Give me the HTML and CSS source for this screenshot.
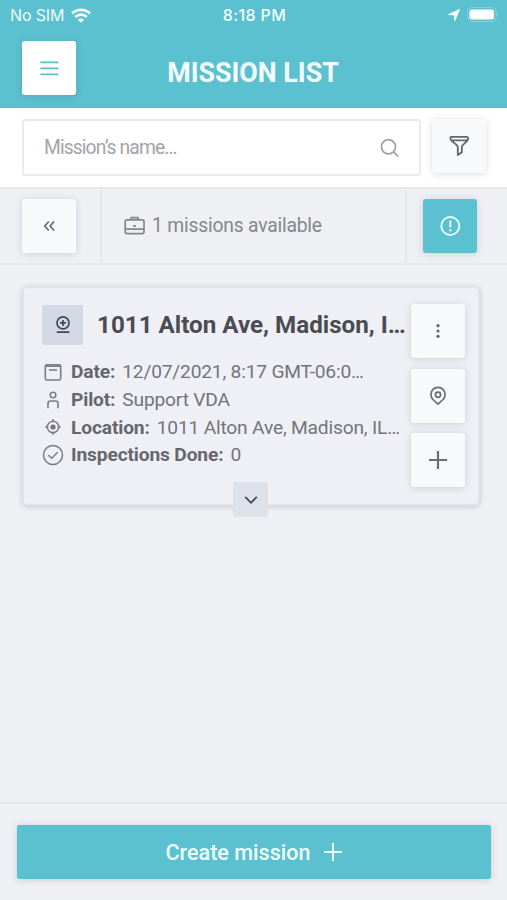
FILE: index.html
```html
<!DOCTYPE html>
<html lang="en">
<head>
<meta charset="utf-8">
<title>Mission list</title>
<link rel="stylesheet" href="styles.css">
</head>
<body>
<div class="app">
  <header class="header">
    <div class="status">
      <div class="carrier"><span>No SIM</span>
        <svg class="wifi" width="20" height="15" viewBox="0 0 20 15" fill="none" stroke="#fff" stroke-width="2.8"><path d="M1 5.5a13 13 0 0 1 18 0M4.2 8.9a8.4 8.4 0 0 1 11.6 0"/><path d="M10 14.8 6.9 11.7a4.4 4.4 0 0 1 6.2 0z" fill="#fff" stroke="none"/></svg>
      </div>
      <span class="clock">8:18 PM</span>
      <div class="indicators">
        <svg width="12" height="12" viewBox="0 0 12 12" fill="#fff"><path d="M11.6.4 6.8 11.8 6.2 6 .4 5.5z" stroke="#fff" stroke-width=".7" stroke-linejoin="round"/></svg>
        <svg width="32" height="16" viewBox="0 0 32 16"><rect x=".5" y=".5" width="28.5" height="14" rx="4" fill="none" stroke="#fff" stroke-opacity=".25"/><rect x="2.5" y="2.5" width="24.5" height="10" rx="2.3" fill="#fff"/><path d="M30.5 5.8v3.6" stroke="#fff" stroke-opacity=".25" stroke-width="1.2"/></svg>
      </div>
    </div>
    <div class="titlebar">
      <button class="tile menu" aria-label="Menu"><svg width="20" height="16" viewBox="0 0 20 16" stroke="#5bc0cf" stroke-width="1.7"><path d="M1.400 2.300h18M1.400 8.300h18M1.400 14.300h18"/></svg></button>
      <h1>MISSION LIST</h1>
    </div>
  </header>

  <section class="search">
    <div class="field"><span>Mission’s name...</span>
      <svg width="20" height="20" viewBox="0 0 20 20" fill="none" stroke="#a0a0a3" stroke-width="1.7"><circle cx="8.5" cy="8.8" r="7.1"/><path d="m13.6 13.9 4.6 4.6"/></svg>
    </div>
    <button class="tile" aria-label="Filter"><svg width="22" height="22" viewBox="0 0 22 22" fill="none" stroke="#63656d" stroke-width="1.8" stroke-linejoin="round"><path d="M3.200 1.800h15.600c1 0 1.300.7 1.300 1.600 0 3.600-6.300 5.600-6.300 8.600v5.200l-4 2.800v-8c0-3-7.300-5-7.300-8.600 0-.9-.3-1.600.7-1.600zM2.800 5.400h16.600"/></svg></button>
  </section>

  <section class="toolbar">
    <div class="cell back"><button class="tile" aria-label="Back"><svg width="12" height="12" viewBox="0 0 12 12" fill="none" stroke="#67696f" stroke-width="1.7"><path d="M5.800 1.500 1.800 6l4 4.500M11.100 1.500l-4 4.500 4 4.500"/></svg></button></div>
    <div class="cell count"><svg width="22" height="19" viewBox="0 0 22 19" fill="none" stroke="#85868e" stroke-width="1.7"><rect x="1.2" y="3.8" width="18.8" height="13.8" rx="2"/><path d="M6.5 3.6l.8-2h6.6l.8 2M1.2 13.200h18.800M9.200 9.800h2.800"/></svg><span>1 missions available</span></div>
    <div class="cell alert"><button class="tile accent" aria-label="Alerts"><svg width="22" height="22" viewBox="0 0 22 22" fill="none" stroke="#e9feff" stroke-width="1.9"><circle cx="11.300" cy="11" r="9"/><path d="M11.300 5.500v6.800M11.300 14.300v2"/></svg></button></div>
  </section>

  <main>
    <article class="card">
      <div class="info">
        <div class="heading">
          <div class="badge"><svg width="18" height="20" viewBox="0 0 18 20" fill="none" stroke="#454854" stroke-width="1.7"><circle cx="9" cy="7.900" r="6"/><path d="M6 7.900h6M9 4.900v6M2.700 17.200h12.600"/></svg></div>
          <h2>1011 Alton Ave, Madison, I…</h2>
        </div>
        <ul>
          <li><svg width="22" height="22" viewBox="0 0 22 22" fill="none" stroke="#7b7c84" stroke-width="1.6"><rect x="3.3" y="3.8" width="15.4" height="15.2" rx="1.6"/><path d="M3.3 5.100h15.400M7 9h8.200"/></svg><b>Date:</b><span class="date">12/07/2021, 8:17 GMT-06:0…</span></li>
          <li><svg width="22" height="22" viewBox="0 0 22 22" fill="none" stroke="#7b7c84" stroke-width="1.6"><circle cx="11" cy="6" r="2.8"/><path d="M6 19.300v-4.800c0-1.700.8-2.500 2.500-2.500h5c1.700 0 2.500.8 2.500 2.500v4.800"/></svg><b>Pilot:</b><span class="pilot">Support VDA</span></li>
          <li><svg width="22" height="22" viewBox="0 0 22 22" fill="none" stroke="#7b7c84" stroke-width="1.6"><circle cx="11" cy="11" r="5.7"/><circle cx="11" cy="11" r="2.6" fill="#71737a" stroke="none"/><path d="M11 3.200v3M11 15.800v3M3.200 11h3M15.800 11h3"/></svg><b>Location:</b><span class="location">1011 Alton Ave, Madison, IL…</span></li>
          <li><svg width="22" height="22" viewBox="0 0 22 22" fill="none" stroke="#7b7c84" stroke-width="1.500"><circle cx="11" cy="11" r="9.500"/><path d="m6.300 11 3.400 3.200 5.900-6"/></svg><b>Inspections Done:</b><span class="done">0</span></li>
        </ul>
      </div>
      <div class="actions">
        <button class="tile" aria-label="More"><svg width="6" height="16" viewBox="0 0 6 16" fill="#63656d"><circle cx="3" cy="2.700" r="1.600"/><circle cx="3" cy="8" r="1.600"/><circle cx="3" cy="13.300" r="1.600"/></svg></button>
        <button class="tile" aria-label="Map"><svg width="18" height="20" viewBox="0 0 18 20" fill="none" stroke="#6b6c73" stroke-width="1.700"><path d="M9 18.200 4 13.500a7.100 7.100 0 1 1 10 0z" stroke-linejoin="round"/><circle cx="9" cy="8.700" r="2.600"/></svg></button>
        <button class="tile" aria-label="Add"><svg width="20" height="20" viewBox="0 0 20 20" stroke="#6b6c73" stroke-width="2.200"><path d="M10 1v18M1 10h18"/></svg></button>
      </div>
      <button class="expand" aria-label="Expand"><svg width="14" height="10" viewBox="0 0 14 10" fill="none" stroke="#454854" stroke-width="1.800"><path d="m1.200 1.800 5.800 6 5.800-6"/></svg></button>
    </article>
  </main>

  <footer>
    <button class="create"><span>Create mission</span><svg width="20" height="20" viewBox="0 0 20 20" stroke="#effeff" stroke-width="1.900"><path d="M10 1v18M1 10h18"/></svg></button>
  </footer>
</div>
</body>
</html>
```

FILE: styles.css
```css
* { box-sizing: border-box; }
body { margin: 0; font-family: Roboto, sans-serif; background: #eff0f4; color: #73747b; }
h1, h2, ul { margin: 0; padding: 0; }
button { border: 0; padding: 0; font: inherit; }
svg { display: block; flex: none; }
.app { height: 900px; display: flex; flex-direction: column; overflow: hidden; }

.header { height: 108px; background: #5bc0cf; color: #f5feff; }
.status { height: 30px; display: grid; grid-template-columns: 1fr auto 1fr; align-items: center; padding: 0 8px 0 10px; font: 16px/20px Inter, sans-serif; }
.carrier { display: flex; align-items: center; gap: 7px; letter-spacing: -.15px; opacity: .95; }
.clock { font-weight: 500; letter-spacing: .4px; }
.indicators { display: flex; justify-content: flex-end; align-items: center; gap: 7px; }
.titlebar { display: grid; grid-template-columns: 54px 1fr 54px; align-items: center; padding: 11px 23px 0 22px; }
h1 { font-size: 26.8px; line-height: 32px; font-weight: 700; text-align: center; padding-top: 9px; white-space: nowrap; }

.tile { width: 54px; height: 54px; flex: none; display: flex; align-items: center; justify-content: center; background: #f8f9fb; border-radius: 3px; box-shadow: 0 1px 7px rgba(70, 75, 95, .2); }
.menu { background: #fff; }
.accent { background: #5bc0cf; }

.search { height: 79px; background: #fff; display: flex; padding: 11px 21px 0 22px; gap: 11px; }
.field { flex: 1; height: 57px; border: 2px solid #ebebed; border-radius: 3px; display: flex; align-items: center; justify-content: space-between; padding: 0 19px 0 20px; color: #a3a4a7; font-size: 19.3px; letter-spacing: -.9px; }

.toolbar { height: 78px; display: grid; grid-template-columns: 102px 305px 1fr; border-top: 2px solid #e7e8ec; border-bottom: 2px solid #e7e8ec; }
.cell { display: flex; align-items: center; border-right: 2px solid #e7e8ec; }
.alert { border: 0; padding-left: 16px; }
.back { padding-left: 22px; }
.count { padding: 0 0 1px 22px; gap: 6px; font-size: 19.3px; letter-spacing: -.2px; color: #85868e; }

main { flex: 1; padding: 21px 27px 0 22px; }
.card { position: relative; height: 220px; border: 2px solid #e3e4e9; border-radius: 6px; box-shadow: 0 1px 5px rgba(70, 75, 90, .25); display: flex; justify-content: space-between; padding: 16px 13px 0 18px; background: #eff0f5; }
.info { width: 368px; }
.heading { display: flex; align-items: center; gap: 14px; height: 41px; }
.badge { width: 41px; height: 40px; flex: none; display: flex; align-items: center; justify-content: center; background: #d5d9e5; border-radius: 2px; }
h2 { font-size: 24.2px; line-height: 30px; font-weight: 700; color: #4b4c53; white-space: nowrap; }
ul { list-style: none; padding-top: 13px; }
li { display: flex; align-items: center; height: 27.7px; font-size: 19.2px; white-space: nowrap; }
li b { margin: 0 7px; font-weight: 700; letter-spacing: -.15px; color: #66676e; }
li span { letter-spacing: -.19px; }
.actions { display: flex; flex-direction: column; gap: 10.5px; }
.expand { position: absolute; left: 209px; bottom: -13px; width: 35px; height: 35px; display: flex; align-items: center; justify-content: center; background: #dde1ea; border-radius: 2px; }

footer { height: 98px; border-top: 2px solid #e5e6ea; padding: 21px 16px 0 17px; }
.create { width: 100%; height: 54px; display: flex; align-items: center; justify-content: center; gap: 12px; background: #5bc0cf; color: #effeff; border-radius: 2px; box-shadow: 0 1px 7px rgba(80, 70, 110, .22); font-size: 21.6px; font-weight: 500; }
```
